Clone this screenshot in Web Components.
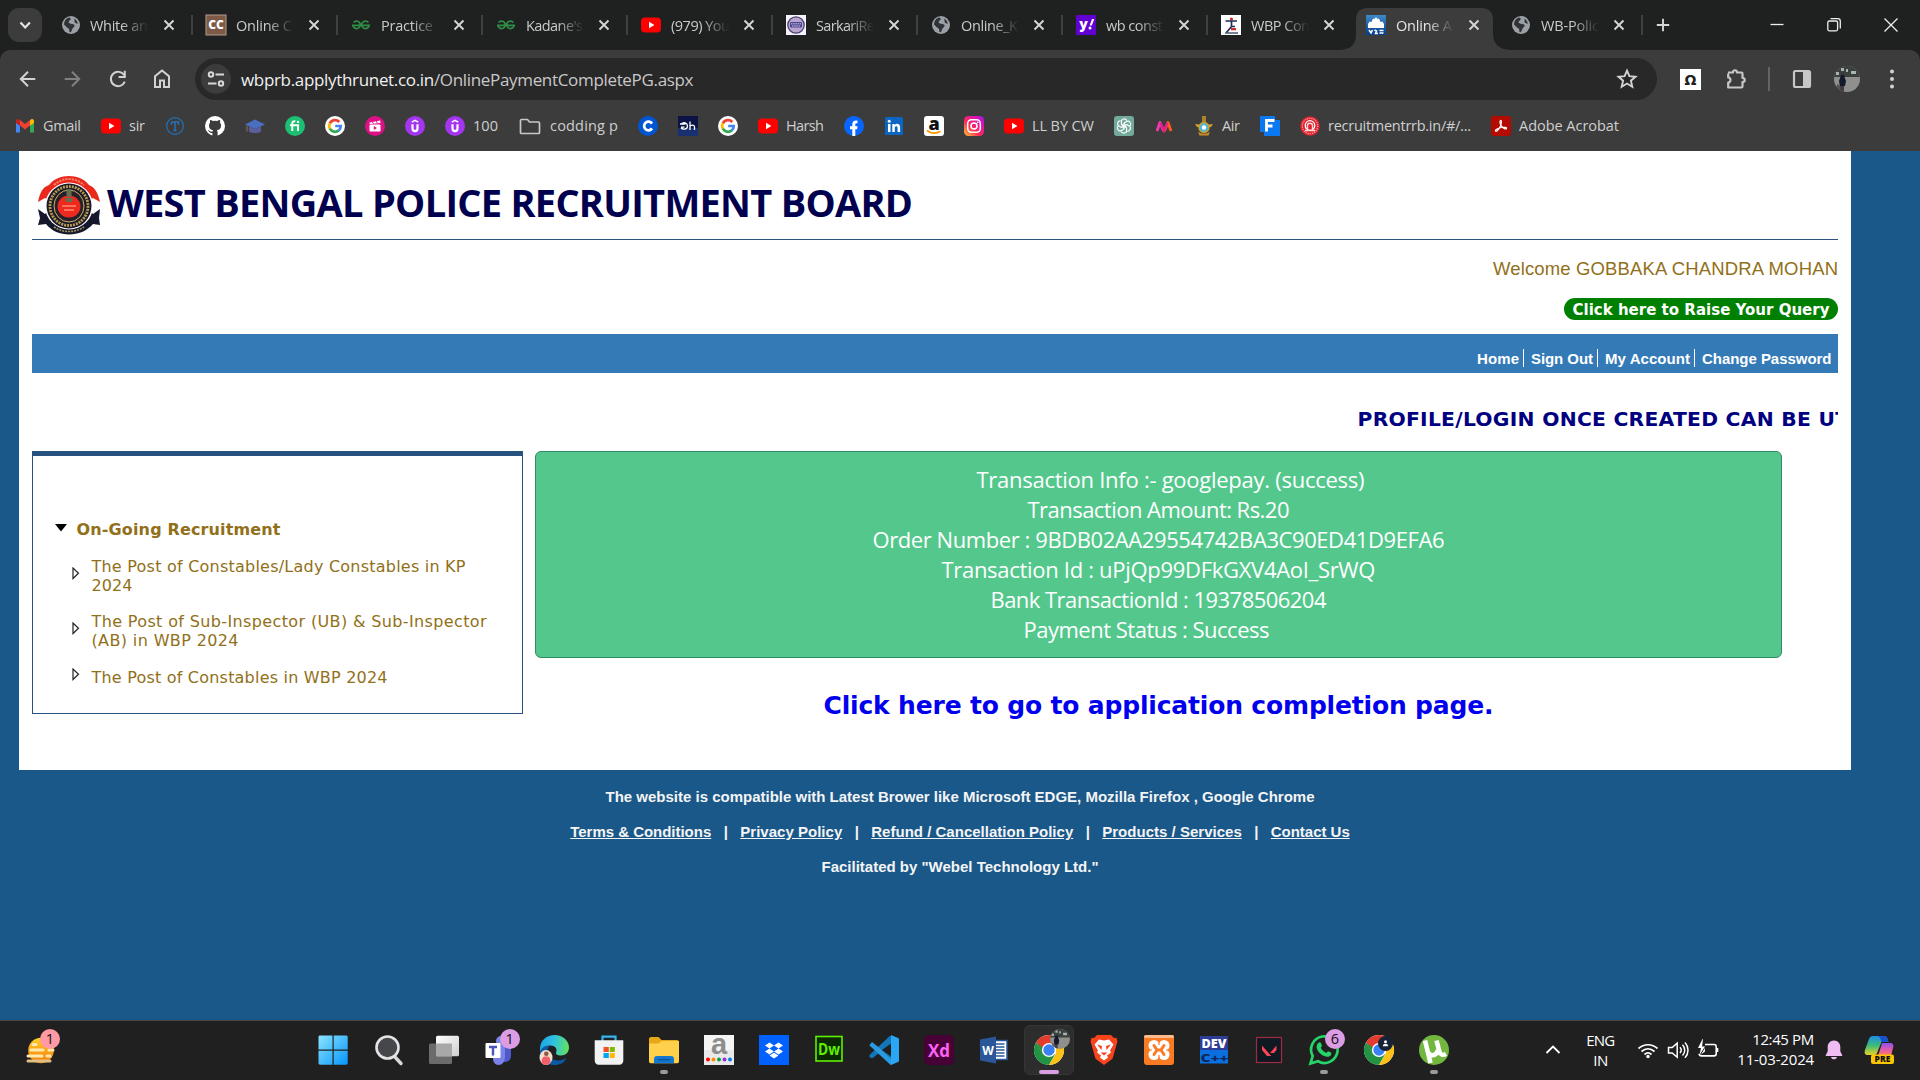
<!DOCTYPE html>
<html lang="en">
<head>
<meta charset="utf-8">
<title>West Bengal Police Recruitment Board</title>
<style>
html,body{margin:0;padding:0;width:1920px;height:1080px;overflow:hidden;background:#1a588a}
</style>
</head>
<body>
<desktop-screen></desktop-screen>
<script>
const UI = '"Open Sans","Noto Sans",sans-serif';
const ARIAL = '"Liberation Sans",Arial,sans-serif';
const VERDANA = '"DejaVu Sans",Verdana,sans-serif';

/* base class: renders css + html into an open shadow root */
class Base extends HTMLElement {
  connectedCallback() {
    if (this.shadowRoot) return;
    this.attachShadow({mode: 'open'}).innerHTML = `<style>*{box-sizing:border-box}${this.css()}</style>${this.html()}`;
  }
  css() { return ''; }
  html() { return '<slot></slot>'; }
}

/* text set to a fixed measure by tracking */
class FitText extends HTMLElement {
  connectedCallback() {
    if (!this.shadowRoot) this.attachShadow({mode: 'open'}).innerHTML =
      `<style>:host{display:block;white-space:pre;flex:none;width:${this.getAttribute('w')}px}span{display:inline-block}</style><span><slot></slot></span>`;
    FitText.all.add(this);
  }
  fit() {
    const s = this.shadowRoot.querySelector('span'), n = this.textContent.length;
    s.style.letterSpacing = '0px';
    const nat = s.getBoundingClientRect().width;
    s.style.letterSpacing = ((+this.getAttribute('w') - nat) / Math.max(1, n - 1)).toFixed(3) + 'px';
  }
}
FitText.all = new Set();
customElements.define('fit-text', FitText);

const YT = '<rect x="0" y="2.5" width="20" height="15" rx="4" fill="#f00"/><path d="M8 6.8v6.4l5.4-3.2z" fill="#fff"/>';
const GLOBE = '<circle cx="10" cy="10" r="9" fill="#9aa0a6"/><path d="M8 2.5c2 .6 2.2 1.8 1 2.7-1.8 1.2-1.8 2.2-.6 3 1.600 1 4 .2 5 1.800.6 1.300-.4 2-1.300 2.800-1.200 1.200-.9 3.200-2.600 4.400-1.400.3-1.300-1.200-1.200-2.200.1-1.500-1.200-1.800-2.300-2.600L3 9.500C3 6 5 3.300 8 2.500zM13 3.500c1.800.9 3.500 2.800 3.900 5.200-1.300-.1-2.900-.5-3.300-1.600-.4-1.100.6-1.700-.6-3.600z" fill="#303235"/>';
const G = '<circle cx="10" cy="10" r="10" fill="#fff"/><g fill="none" stroke-width="2.700"><path d="M14.300 6A5.800 5.800 0 0 0 4.900 7.300" stroke="#ea4335"/><path d="M4.900 7.200a5.800 5.800 0 0 0 0 5.600" stroke="#fbbc05"/><path d="M4.900 12.700a5.800 5.800 0 0 0 8.900 1.700" stroke="#34a853"/><path d="M10.200 10h5.500a5.600 5.600 0 0 1-2 4.500" stroke="#4285f4"/></g>';
const GFG = '<g fill="none" stroke="#2f8d46" stroke-width="1.700"><path d="M2.600 7.600A3.700 3.700 0 1 1 1.900 10.300M17.400 7.600A3.700 3.700 0 1 0 18.100 10.300M1 10.300H19"/></g>';
const UDEMY = '<circle cx="10" cy="10" r="10" fill="#a435f0"/><path d="M6.800 6.200 10 4.400l3.200 1.800" fill="none" stroke="#fff" stroke-width="1.500"/><path d="M7.500 8.200v4.400a2.500 2.500 0 0 0 5 0V8.200" fill="none" stroke="#fff" stroke-width="2.200"/>';
const CHROME = '<circle cx="15" cy="15" r="15" fill="#fff"/><path d="M15 15 2 7.500A15 15 0 0 1 28 7.500z" fill="#e33b2e"/><path d="M2 7.500A15 15 0 0 0 15 30l6.400-11.200L8.600 18.600z" fill="#229342"/><path d="M28 7.500A15 15 0 0 1 15 30l6.800-11.300L20.500 8z" fill="#fbc116"/><path d="M2 7.500 8.700 18.800 11 11zM28 7.500H14l7 3z" fill="#e33b2e"/><path d="M2 7.500 8.700 18.800l4.500-3z" fill="#229342"/><circle cx="15" cy="15" r="7.100" fill="#fff"/><circle cx="15" cy="15" r="5.700" fill="#3a82f2"/>';

const T = (x, y, s, f, w, t, fam = 'Open Sans', extra = '') =>
  `<text x="${x}" y="${y}" font-size="${s}" fill="${f}" font-weight="${w}" font-family="${fam},sans-serif" text-anchor="middle" ${extra}>${t}</text>`;

/* name: [width, height, svg content] */
const ICONS = {
  globe: [20, 20, GLOBE], yt: [20, 20, YT], g: [20, 20, G], gfg: [20, 20, GFG], udemy: [20, 20, UDEMY],
  cc: [20, 20, '<rect width="20" height="20" fill="#7d5a48" stroke="#b39a8b"/>' + T(10, 14.3, 12, '#fff', 800, 'CC')],
  sarkari: [20, 20, '<rect width="20" height="20" fill="#f4f2fa"/><circle cx="10" cy="10" r="8.200" fill="#b9a5cf" stroke="#4c4370" stroke-width="1.300"/><rect x="4" y="7" width="12" height="5.500" rx="1" fill="#4a4890"/><path d="M5 8.800h10M6 11h8" stroke="#d8cdea" stroke-width="1" stroke-dasharray="1.500 .7"/>'],
  yahoo: [20, 20, '<rect width="20" height="20" fill="#6001d2"/>' + T(7.500, 13.500, 14, '#fff', 800, 'y') + '<path d="M13.600 10.400 16 4h2.300l-2.500 6.400z" fill="#fff"/><circle cx="14" cy="13" r="1.500" fill="#fff"/>'],
  wbp: [20, 20, '<rect width="20" height="20" fill="#fff"/><circle cx="10.500" cy="4" r="1.600" fill="#d22"/><path d="M4.500 6H16M10.500 6v5.500L5.500 17.500M10.500 11.500h3.500" fill="none" stroke="#1d3150" stroke-width="1.700"/><path d="M10 13h5v2.300h-5z" fill="#d42b2b"/><path d="M4 18h13" stroke="#1d3150" stroke-width="1.200"/>'],
  wbprb: [20, 20, '<defs><linearGradient id="a" x2="0" y2="1"><stop stop-color="#3d8ac8"/><stop offset="1" stop-color="#063c8a"/></linearGradient></defs><rect width="20" height="20" fill="url(#a)"/><path d="M2 13V9l1.500-2.500 2 .5L7 3.500l1.500.5L10 2l1.500 2 1.500-.5L14.500 7l2-.5L18 9v4z" fill="#fff"/><path d="m3 15 2 3 1.500-3M8.500 15l2 1-1 2.500h2.500M13.500 15.500h4M13.500 18h4" fill="none" stroke="#fff" stroke-width="1.500"/>'],
  gmail: [20, 20, '<path d="M1 5v11.500h4V9.700z" fill="#4285f4"/><path d="M19 5v11.500h-4V9.700z" fill="#34a853"/><path d="M15 4.800v5L19 7V5c0-2-2-2.600-3.300-1.500z" fill="#fbbc04"/><path d="M1 5c0-2 2-2.600 3.300-1.500L5 4v5.800L1 7z" fill="#c5221f"/><path d="m5 4 5 4 5-4v5.600l-5 3.800-5-3.800z" fill="#ea4335"/>'],
  tc: [20, 20, '<circle cx="10" cy="10" r="8.300" fill="none" stroke="#2472b8" stroke-width="1.200"/><path d="M6.500 6h7v2.800M6.500 6v2.800M10 6v8.500M8.300 14.500h3.400" fill="none" stroke="#2472b8" stroke-width="1.500"/>'],
  github: [20, 20, '<circle cx="10" cy="10" r="10" fill="#fff"/><path d="M7.400 20v-3.100c-2.400.5-3.200-.6-3.700-1.800-.3-.6-.9-1-.9-1.200 1.500-.2 1.800 1.300 2.700 1.700.7.300 1.500.1 2 0 .1-.6.300-1 .7-1.300C5.600 14 4 12.600 4 9.500c0-1.100.4-2 1-2.700-.2-.8-.2-1.800.2-2.700 1 0 1.900.5 2.700 1a10 10 0 0 1 4.300 0c.8-.5 1.700-1 2.700-1 .4.900.4 1.900.2 2.700.6.700 1 1.600 1 2.700 0 3.100-1.700 4.500-4.300 4.800.5.500.8 1.100.8 2V20z" fill="#3c3c3c"/>'],
  cap: [20, 20, '<path d="m0 8.500 10-5 10 5-10 4.500z" fill="#4a6ec0"/><path d="M4 10.500v5c3 2 9 2 12 0v-5L10 13z" fill="#5a5f9c"/><path d="M2 9.500v6" stroke="#70605c" stroke-width="1.500"/>'],
  fi: [20, 20, '<circle cx="10" cy="10" r="10" fill="#1dbf73"/><path d="M7.300 15V7.300c0-1.600.9-2.200 3-2M5 9.300h9M13 9v6" fill="none" stroke="#fff" stroke-width="1.900"/><circle cx="13" cy="5.900" r="1.200" fill="#fff"/>'],
  clap: [20, 20, '<circle cx="10" cy="10" r="10" fill="#df0f88"/><rect x="4.500" y="8.500" width="11" height="7" rx="1" fill="#fff"/><path d="m4.500 6.600 10.600-2 .4 2.400-10.800 1z" fill="#fff"/><path d="m7 5.500 1.500 2M11 5l1.500 2" stroke="#df0f88" stroke-width="1"/><path d="M8.800 10v4l3.200-2z" fill="#df0f88"/>'],
  folder: [24, 20, '<path d="M3.500 3.500h6l2 2.500h9c.6 0 1 .4 1 1v9.500c0 .6-.4 1-1 1h-17c-.6 0-1-.4-1-1V4.500c0-.6.400-1 1-1z" fill="none" stroke="#c7c7c7" stroke-width="1.700"/>'],
  cblue: [20, 20, '<circle cx="10" cy="10" r="10" fill="#0056d2"/><path d="M14 12.400a4.300 4.300 0 1 1 0-4.800" fill="none" stroke="#fff" stroke-width="2.800"/>'],
  dh: [20, 20, '<rect width="20" height="20" fill="#0c1445"/><rect y="12" width="20" height="8" fill="#183070"/><path d="M2 8h5.500M3 11.200h3.500M3.500 8c2-2.500 6-1 6 2 0 3.500-4.500 4-6.500 1.800M12 5.500V14M12 10.500c1-2 4.500-2 4.500.5v3" fill="none" stroke="#fff" stroke-width="1.300"/>'],
  fb: [20, 20, '<circle cx="10" cy="10" r="10" fill="#0866ff"/><path d="M8.300 20v-6.700H6V10.300h2.300V8.600c0-3.200 1.600-4.300 5.200-3.900v2.600c-1.800-.1-2.200.2-2.200 1.500v1.500h2.300l-.5 3h-1.800V20z" fill="#fff"/>'],
  li: [20, 20, '<rect x="1" y="1" width="18" height="18" rx="1.500" fill="#0a66c2"/><path d="M4 8h2.500v8H4zM8.300 8h2.400v1.200c1.400-2.200 5.400-1.800 5.400 2V16h-2.500v-4.200c0-2.300-2.800-2-2.800 0V16H8.300z" fill="#fff"/><circle cx="5.200" cy="5.300" r="1.500" fill="#fff"/>'],
  amz: [20, 20, '<rect width="20" height="20" rx="3" fill="#fff"/>' + T(10, 13.600, 18, '#111', 800, 'a') + '<path d="M3 14.500c4 3.200 9.500 3.200 13.500.8" fill="none" stroke="#f90" stroke-width="1.800"/>'],
  insta: [20, 20, '<defs><linearGradient id="i" x1="0" y1="1" x2="1" y2="0"><stop stop-color="#ffc83a"/><stop offset=".4" stop-color="#ff2a55"/><stop offset=".75" stop-color="#dc12b5"/><stop offset="1" stop-color="#9c1be8"/></linearGradient></defs><rect width="20" height="20" rx="4.500" fill="url(#i)"/><rect x="3.700" y="3.700" width="12.600" height="12.600" rx="3.700" fill="none" stroke="#fff" stroke-width="1.500"/><circle cx="10" cy="10" r="3" fill="none" stroke="#fff" stroke-width="1.500"/><circle cx="13.700" cy="6.300" r=".9" fill="#fff"/>'],
  gpt: [20, 20, '<rect width="20" height="20" rx="3" fill="#74aa9c"/><g fill="none" stroke="#fff" stroke-width="1.100">' + [0,60,120,180,240,300].map(a => `<path transform="rotate(${a} 10 10)" d="M7.400 8.500V5.600c0-3 4.300-3.700 5.500-1M7.400 8.500l5 2.900"/>`).join('') + '</g>'],
  myntra: [20, 20, '<path d="M3 15 6 6.500 9.500 15" fill="none" stroke="#f13ab1" stroke-width="2.800" stroke-linejoin="round"/><path d="m10.500 15 3.500-8.500 3 8.500" fill="none" stroke="#fd5d1e" stroke-width="2.800" stroke-linejoin="round"/><path d="m6.500 7 3.500 8 3.500-8" fill="none" stroke="#e91e8c" stroke-width="2.300"/>'],
  air: [20, 20, '<path d="M1 8c3 0 5 1 9 1s6-1 9-1l-2 3-4 .5H7L3 11z" fill="#d1a32b"/><path d="M8 0h4v6H8z" fill="#a8842a"/><circle cx="10" cy="11.500" r="5" fill="#4fb5d8" stroke="#d1a32b" stroke-width="1.300"/><circle cx="10" cy="11.500" r="2.200" fill="#fff"/><path d="M4 15.500c3 3 9 3 12 0l-1.500 4h-9z" fill="#d08c28"/>'],
  f: [20, 20, '<path d="M0 0h15v4h5v16H4v-4H0z" fill="#0a78f0"/><path d="M6.500 15.500v-11h8M6.500 10h6" fill="none" stroke="#fff" stroke-width="2.800"/>'],
  rrb: [20, 20, '<circle cx="10" cy="10" r="9.800" fill="#e0202c"/><circle cx="10" cy="10" r="7.700" fill="none" stroke="#f6a0a4" stroke-width="1.300" stroke-dasharray="1.300 .9"/><circle cx="10" cy="9.500" r="4.800" fill="none" stroke="#fff" stroke-width="1.300"/><path d="M7.500 13V9.500c0-3 5-3 5 0V13M5 14.500h10" fill="none" stroke="#ffd9db" stroke-width="1.400"/>'],
  acro: [20, 20, '<rect width="20" height="20" rx="3" fill="#b30b00"/><path d="M9.400 4.500c1.500-.6 1.300 3.500-.6 6.800-1.400 2.600-3.400 4.600-4.300 3.700-.9-1 3-3 6.200-3.500 2.800-.4 5.200-.1 4.800 1-.5 1.300-3.500-.3-5-2.300-1.700-2.300-1.900-5.400-1.100-5.700z" fill="none" stroke="#fff" stroke-width="1.200"/>'],
  close: [14, 14, '<path d="m2.500 2.500 9 9M11.500 2.500l-9 9" stroke="#d6d6d6" stroke-width="1.900"/>'],
  plus: [14, 14, '<path d="M7 .8v12.400M.8 7h12.400" stroke="#d6d6d6" stroke-width="1.900"/>'],
  down: [34, 34, '<rect width="34" height="34" rx="11" fill="#3c3c3c"/><path d="m12.500 14.500 4.700 5 4.700-5" fill="none" stroke="#e4e4e4" stroke-width="2.200"/>'],
  min: [20, 20, '<path d="M3.500 9.500h13" stroke="#eee" stroke-width="1.300"/>'],
  max: [20, 20, '<rect x="3.800" y="6" width="9.800" height="9.800" rx="1.500" fill="none" stroke="#eee" stroke-width="1.300"/><path d="M6.500 3.700h7.300a2.500 2.500 0 0 1 2.500 2.500v7.300" fill="none" stroke="#eee" stroke-width="1.300"/>'],
  wclose: [20, 20, '<path d="m3.500 3.500 13 13M16.500 3.500l-13 13" stroke="#eee" stroke-width="1.300"/>'],
  back: [24, 24, '<path d="M19.300 12H5.500M12 4.800 4.800 12l7.200 7.200" fill="none" stroke="#d2d2d2" stroke-width="2"/>'],
  fwd: [24, 24, '<path d="M4.700 12h13.800M12 4.800l7.200 7.200-7.200 7.200" fill="none" stroke="#808080" stroke-width="2"/>'],
  reload: [24, 24, '<path d="M18.300 8.300a7.200 7.200 0 1 0 .5 6.400" fill="none" stroke="#d2d2d2" stroke-width="2"/><path d="M18.800 3.800v6.200h-6.200" fill="none" stroke="#d2d2d2" stroke-width="2"/>'],
  home: [24, 24, '<path d="M5 20V9.300L12 3.500l7 5.800V20h-5v-6.500h-4V20z" fill="none" stroke="#d2d2d2" stroke-width="2"/>'],
  tune: [30, 30, '<circle cx="15" cy="15" r="15" fill="#3c3c3c"/><g fill="none" stroke="#d8d8d8" stroke-width="2"><circle cx="10" cy="10.500" r="2.200"/><path d="M14.500 10.500H23M7 19.500h8.500"/><circle cx="20" cy="19.500" r="2.200"/></g>'],
  star: [24, 24, '<path d="m12 3.600 2.400 5.600 6.100.5-4.600 4 1.400 6-5.300-3.200-5.300 3.200 1.400-6-4.600-4 6.100-.5z" fill="none" stroke="#d2d2d2" stroke-width="1.900"/>'],
  omega: [21, 21, '<rect width="21" height="21" fill="#fff"/>' + T(10.500, 15.500, 14, '#222', 700, 'Ω', 'DejaVu Sans')],
  ext: [24, 24, '<path d="M4 5.500h5c-.3-3 4-3 4 0h4.500c.6 0 1 .4 1 1V11c3 0 3 4 0 4v4.500c0 .6-.4 1-1 1H4.200v-5c3 0 3-5 0-5v-4" fill="none" stroke="#c7c7c7" stroke-width="2.200" stroke-linejoin="round"/>'],
  panel: [24, 24, '<rect x="4" y="4" width="16" height="16" rx="1.500" fill="none" stroke="#c7c7c7" stroke-width="2.200"/><path d="M13 4h7v16h-7z" fill="#c7c7c7"/>'],
  avatar: [26, 26, '<defs><clipPath id="c"><circle cx="13" cy="13" r="13"/></clipPath></defs><g clip-path="url(#c)"><rect width="26" height="26" fill="#8f8f8d"/><rect width="26" height="11" fill="#3a403d"/><path d="M2 6h3v3H2zM7 2h3v3H7zM17 5h5v3h-5zM12 3h2v3h-2z" fill="#aab3b0"/><path d="M7 9c2-1.500 4 0 3.500 2l1.500 4-1 5-5 1-1-6z" fill="#151a2a"/><path d="M6 20h4v6H6z" fill="#463b41"/><path d="M3 18l3 2v5l-3-2z" fill="#57505a"/></g>'],
  dots: [24, 24, '<g fill="#d2d2d2"><circle cx="12" cy="4.500" r="2"/><circle cx="12" cy="12" r="2"/><circle cx="12" cy="19.500" r="2"/></g>'],
  /* taskbar */
  weather: [34, 34, '<defs><linearGradient id="w" x2="0" y2="1"><stop stop-color="#ffd02a"/><stop offset="1" stop-color="#f57a08"/></linearGradient></defs><circle cx="17" cy="17.500" r="12.800" fill="url(#w)"/><g stroke-width="3" stroke-linecap="round"><path d="M9 11.500h3M7 17h12M25 17h4M4 23h14M23 23h3" stroke="#ffe9b0"/><path d="M4 28h22" stroke="#e0bf85"/></g>'],
  win: [30, 30, '<defs><linearGradient id="b" x2="1" y2="1"><stop stop-color="#8be4ff"/><stop offset="1" stop-color="#0595f8"/></linearGradient></defs><g transform="translate(-.5 0)"><path d="M1.500.5H14v14H0V2C0 1.200.6.5 1.500.5zM15.200.5h12.500c.8 0 1.500.6 1.500 1.400v12.600h-14zM0 15.700h14v14H1.500c-.8 0-1.500-.6-1.500-1.400zM15.200 15.700h14v12.600c0 .8-.6 1.400-1.500 1.400H15.200z" fill="url(#b)"/></g>'],
  search: [30, 30, '<path d="m20.500 21.500 6.500 7" stroke="#d9d9dc" stroke-width="3.400" stroke-linecap="round"/><circle cx="13.500" cy="12.500" r="11" fill="#46474a" stroke="#e3e4e6" stroke-width="2.600"/>'],
  taskview: [32, 30, '<defs><linearGradient id="t" x2="1" y2="1"><stop stop-color="#fff"/><stop offset="1" stop-color="#cfcfcf"/></linearGradient></defs><rect x="1" y="8.500" width="23" height="20.500" rx="1.500" fill="#6b6b6b"/><rect x="8" y=".8" width="23" height="20.500" rx="1.500" fill="url(#t)"/><path d="M8 8.500h16v12.800H8z" fill="#a8a8a8"/>'],
  teams: [34, 34, '<circle cx="19" cy="8" r="5" fill="#7b83eb"/><path d="M17 10h12v13c0 3-2 6-6 6-5 0-7-3-7-6z" fill="#5059c9"/><path d="M11 10h12v13c0 6-3 9-6.500 9S11 29 11 25z" fill="#7b83eb"/><rect x="3.500" y="10" width="15" height="15" rx="1" fill="#fff"/><path d="M7 14h8M11 14v8.500" stroke="#4b53bc" stroke-width="2.400"/>'],
  edge: [30, 30, '<defs><linearGradient id="e" x1="0" y1=".3" x2="1" y2=".4"><stop stop-color="#1ba4e8"/><stop offset=".5" stop-color="#2fc3dc"/><stop offset="1" stop-color="#63e05e"/></linearGradient></defs><path d="M1 14C1 5 8 0 15.500 0 24 0 30 6 30 12.500c0 5-3.500 8-8 8-4 0-5.500-1.500-5-3 1.500-3 0-7-5.500-7C6 10.500 2 14 1 18z" fill="url(#e)"/><path d="M1 18c1-5 5-8 10-7.500-3 2.500-3 7 0 11s8 6 16.500 1.500C25 28 21 30 15.500 30 7 30 0 25 1 18z" fill="#0c59a4"/><ellipse cx="7" cy="22.500" rx="6.500" ry="7.500" fill="#f2ddcf"/><path d="M2.500 28c0-4 1-6 3-6.500h3.500c2 .5 2.500 3 2.500 6.500-3 2.500-6.500 2.500-9 0z" fill="#f0606a"/><circle cx="7.300" cy="18.800" r="2.300" fill="#8e5748"/>'],
  store: [30, 30, '<path d="M8.500 6V1.700h13V6" fill="none" stroke="#35b5f0" stroke-width="2.200"/><path d="M.7 5.300h28.600v20.500c0 2-1.600 4-4 4H4.700c-2.400 0-4-2-4-4z" fill="#f2f2f2"/><path d="M9.500 12h5.300v5H9.500z" fill="#f25022"/><path d="M15.800 12h5v5h-5z" fill="#7fba00"/><path d="M9.500 18h5.300v5H9.500z" fill="#00a4ef"/><path d="M15.800 18h5v5h-5z" fill="#ffb900"/>'],
  explorer: [30, 30, '<path d="M0 4c0-1 .8-2 2-2h7.500l3 3H28c1 0 2 1 2 2v8H0z" fill="#e6a817"/><path d="M0 8.500h9.500l3-2.500H30v20.500c0 1-.8 1.800-2 1.800H2c-1 0-2-.8-2-1.800z" fill="#ffd04c"/><path d="M5 28.300V24c0-1.700 1.200-3 3-3h14c1.800 0 3 1.300 3 3v4.300z" fill="#1177cf"/><path d="M9 24.700h12" stroke="#0a4f94" stroke-width="1.300"/>'],
  acolor: [30, 30, '<rect width="30" height="30" fill="#e9e9e9"/><rect width="30" height="15" fill="#f5f5f5"/>' + T(15, 19, 29, '#8d8d8d', 700, 'a', 'Liberation Sans') + '<circle cx="4" cy="24.500" r="2" fill="#f00"/><circle cx="9.500" cy="24.500" r="2" fill="#ff8a00"/><circle cx="15" cy="24.500" r="2" fill="#0a9d4a"/><circle cx="20.500" cy="24.500" r="2" fill="#8a35d6"/><circle cx="26" cy="24.500" r="2" fill="#0a78e8"/>'],
  dropbox: [30, 30, '<rect width="30" height="30" fill="#0061fe"/><g fill="#fff"><path d="m10.500 7.500 4.500 3-4.500 3-4.500-3zM19.500 7.500l4.500 3-4.500 3-4.500-3zM10.500 13.500l4.500 3-4.500 3-4.500-3zM19.500 13.500l4.500 3-4.500 3-4.500-3zM15 17.700l4.500 2.900-4.500 2.900-4.500-2.900z"/></g>'],
  dw: [30, 30, '<rect x="2" y="1.500" width="26" height="24.500" fill="#0b2a04" stroke="#5ff000" stroke-width="1.600"/>' + T(15, 19.500, 16.500, '#5ff000', 700, 'Dw', 'Open Sans', 'textLength="22" lengthAdjust="spacingAndGlyphs"')],
  vscode: [30, 30, '<path d="M21.500 0 29 3.500v23L21.500 30 9.500 18.500 3 23.500.5 22v-2L21.800 0z" fill="#1276b8"/><path d="M.5 10 3 7l7 5.500 12 11.500V30L.5 10.500z" fill="#2b9be0"/><path d="m22 0 8 3.500v23L22 30z" fill="#2aa6f2"/><path d="M22 8.500v13L13 15z" fill="#202020"/>'],
  xd: [30, 30, '<rect width="30" height="30" rx="5.500" fill="#470137"/>' + T(15, 21.500, 18, '#ff61f6', 700, 'Xd', 'Open Sans', 'textLength="22" lengthAdjust="spacingAndGlyphs"')],
  word: [30, 30, '<rect x="14" y="5.500" width="14" height="19" fill="#fff" stroke="#2b579a" stroke-width="1.500"/><path d="M17 9h8.500M17 12h8.500M17 15h8.500M17 18h8.500M17 21h8.500" stroke="#2b579a" stroke-width="1.300"/><path d="m1 4.500 16-3v27l-16-3z" fill="#2b579a"/>' + T(9, 19.500, 12, '#fff', 700, 'W')],
  chrome: [30, 30, CHROME],
  brave: [30, 30, '<path d="M8 0h14l3 3 2.500-.3 1 4-1 3-4 14L15 30 6.500 23.700l-4-14-1-3 1-4L5 3z" fill="#f8431c"/><path d="m15 5.500 5-1 4.500 5-3.500 6 1 2-4 3 1 2-4 3L11 22.500l1-2-4-3 1-2-3.500-6 4.500-5z" fill="#fff"/><path d="m8 9.500 5 1.500-.5 4zM22 9.500 17 11l.5 4zM11.500 17.500h7L15 20.500z" fill="#f8431c"/>'],
  xampp: [30, 30, '<rect width="30" height="30" rx="3" fill="#fb7a24"/><rect width="30" height="3" rx="1.500" fill="#fdbb90"/><g fill="#fff"><circle cx="10" cy="10.500" r="5.500"/><circle cx="20" cy="10.500" r="5.500"/><circle cx="10" cy="19.500" r="5.500"/><circle cx="20" cy="19.500" r="5.500"/><path d="M10 10h10v10H10z"/></g><g fill="none" stroke="#fb7a24" stroke-width="3" stroke-linecap="round"><path d="M10 10.500 13 15l-3 4.500M20 10.500 17 15l3 4.500M13 15h4"/></g><path d="M15 5v5M15 20v5M4 15h4M26 15h-4" stroke="#fb7a24" stroke-width="1.200"/>'],
  dev: [30, 30, '<rect x="1" y="1" width="28" height="14" fill="#2d3e96"/><rect x="1" y="15" width="28" height="13.500" fill="#0b6fe0"/>' + T(15, 12.700, 11.500, '#fff', 800, 'DEV', 'Open Sans', 'textLength="25" lengthAdjust="spacingAndGlyphs"') + T(15.500, 27.300, 11, '#0b2858', 800, 'C++', 'Open Sans', 'textLength="28" lengthAdjust="spacingAndGlyphs"')],
  val: [30, 30, '<rect x="2.500" y="2.500" width="25" height="25" fill="#101822" stroke="#9b2f3d" stroke-width="1.200"/><path d="M8 10.500v4.500l5 6h4.200zM22.500 10.500V15L20 18h-4z" fill="#fd4556"/>'],
  wa: [30, 30, '<path d="M1.500 28.500 3.700 21A13.300 13.300 0 1 1 9 26.300z" fill="none" stroke="#25d366" stroke-width="2.700"/><path d="M10 7.500c1-.5 1.700 0 2 .8l1 2.400c0 .8-1 1.400-1.200 2 1.200 2.400 3 4 5.500 5 .8 0 1.300-1.500 2-1.500l2.700 1.300c.5.400.4 2-.4 3-1.600 1.800-4.500 1.500-7 .3-3.300-1.500-6.700-5.200-7-8.600-.1-2 .9-4 2.400-4.700z" fill="#25d366"/>'],
  ut: [30, 30, '<circle cx="15" cy="15" r="15" fill="#72b840"/><path d="M6 5.500 11.500 28M8.500 16c1.500 6.500 9.500 5 10.500-1M17.500 5.500 20.500 17c.7 2.800 3.500 3.500 6.500 2" fill="none" stroke="#fff" stroke-width="4.600"/>'],
  chev: [20, 20, '<path d="m3.500 13 6.500-6.500L16.500 13" fill="none" stroke="#fff" stroke-width="1.800"/>'],
  wifi: [22, 22, '<g fill="none" stroke="#fff" stroke-width="1.700"><path d="M1.500 9.500c5.500-5 13.500-5 19 0M4.500 12.500c4-3.600 9-3.600 13 0M7.500 15.500c2.200-1.900 4.800-1.900 7 0"/></g><circle cx="11" cy="17.500" r="1.700" fill="#fff"/>'],
  vol: [22, 22, '<g fill="none" stroke="#fff" stroke-width="1.500"><path d="M1.500 8.500h3.700l5-4.300v14l-5-4.300H1.500zM13 8.300c1.500 1.700 1.500 4 0 5.700M15.500 5.800c3 3 3 7.700 0 10.700M18 3.500c4 4.500 4 10.800 0 15.300"/></g>'],
  bat: [22, 22, '<path d="M8 5.500h9c1.400 0 2.200.8 2.200 2.200v7c0 1.400-.8 2.200-2.200 2.200H4.500c-1.400 0-2.300-.8-2.300-2.200" fill="none" stroke="#fff" stroke-width="1.600"/><path d="M19.500 9h1.800v4h-1.800z" fill="#fff"/><path d="M5.500 0 1 9h3l-1.500 7L8 7.500H5L6 0z" fill="#fff"/><path d="M4 15.500 8 9v3.500z" fill="#fff"/>'],
  bell: [20, 22, '<path d="M10 1.500c4 0 6.300 3 6.300 6.500v4.500l1.900 3.500c.2.500 0 1-.5 1H2.300c-.5 0-.7-.5-.5-1l1.900-3.500V8c0-3.500 2.300-6.500 6.300-6.500zM7 18h6c-.4 1.700-1.500 2.300-3 2.300S7.400 19.700 7 18z" fill="#f0bdf2"/>'],
  copilot: [32, 30, '<defs><linearGradient id="p" x2="0" y2="1"><stop stop-color="#1c8fe8"/><stop offset=".5" stop-color="#3dbb78"/><stop offset="1" stop-color="#e8d22a"/></linearGradient><linearGradient id="q" x2="0" y2="1"><stop stop-color="#8b52f0"/><stop offset=".5" stop-color="#e85aa8"/><stop offset="1" stop-color="#ff8a4c"/></linearGradient></defs><path d="M9 1h11c2 0 3 1 3.500 3l1 3h-7L13 18c-.5 1-1.500 2-3 2H4c-3 0-4-2-3-5L5 4c.7-2 2-3 4-3z" fill="url(#p)"/><path d="M14 1h6c2 0 3 1 3.500 3l1 3h-7c-1-3-1.500-5-3.500-6z" fill="#1a4fcf"/><path d="M18 8h8c3 0 4 2 3 5l-2 8-14 1 2-4z" fill="url(#q)"/><rect x="7" y="19.500" width="23" height="9.500" rx="2" fill="#fdc500"/>' + T(18.500, 27.300, 8.500, '#111', 800, 'PRE', 'Open Sans', 'textLength="16"')],
  emblem: [64, 60, '<path d="M1 27C3 17 6 12 12 10 21-2 43-2 52 10c5 2 9 7 11 17l-7-4-5 3H13l-5-3z" fill="#e8291c"/><path d="M1 34l7 5 4-4h40l4 4 7-5-1 9 1 7-7-1C44 63 20 63 9 49l-8 1 2-7z" fill="#15182c"/><ellipse cx="32" cy="31" rx="24" ry="23.500" fill="#fff"/><ellipse cx="32" cy="31" rx="22.500" ry="22.500" fill="#1d1a28"/><ellipse cx="32" cy="31" rx="19" ry="19.500" fill="none" stroke="#b49a53" stroke-width="2.800" stroke-dasharray="2 1"/><ellipse cx="32" cy="31" rx="15" ry="16" fill="#27202a" stroke="#d0b566"/><ellipse cx="32" cy="31.500" rx="11.500" ry="11" fill="#ee2a20"/><path d="M28 23h8l-1 4h-6zM29.500 14h5v8h-5z" fill="#64704e"/><path d="M25 31h14M27 35h10" stroke="#ff8a6b" stroke-width="1.300"/><path d="M17 52c9 6 21 6 30 0" fill="none" stroke="#a9955d" stroke-width="1.600" stroke-dasharray="2 1"/><path d="M17 10c9-8 21-8 30 0" fill="none" stroke="#f6806a" stroke-width="2" stroke-dasharray="2.200 1"/>'],
};

class AppIcon extends Base {
  css() {
    const [w, h] = ICONS[this.getAttribute('name')], s = +(this.getAttribute('size') || w);
    return `:host{display:block;flex:none;width:${s}px;height:${s * h / w}px}svg{display:block;width:100%;height:100%;overflow:visible}`;
  }
  html() {
    const [w, h, c] = ICONS[this.getAttribute('name')];
    return `<svg viewBox="0 0 ${w} ${h}">${c}</svg>`;
  }
}
customElements.define('app-icon', AppIcon);

class BrowserTab extends Base {
  css() {
    return `:host{display:flex;align-items:center;position:relative;flex:none;width:145px;height:50px;padding-left:14px;box-sizing:border-box;font:14.5px/51px ${UI};color:#c9cbca}
    :host([active]){color:#e4e4e4}
    .bg{position:absolute;left:-12px;top:8px;width:170px;height:42px}
    app-icon{position:relative}
    .t{position:relative;margin-left:10px;width:60px;height:50px;overflow:hidden;-webkit-mask-image:linear-gradient(90deg,#000 52%,transparent 97%);mask-image:linear-gradient(90deg,#000 52%,transparent 97%)}
    .t.first{margin-left:9px;margin-right:1px}
    .x{margin-left:10.500px}
    i{position:absolute;right:-1px;top:15px;width:2px;height:20px;background:#3f4140}`;
  }
  html() {
    const a = this.hasAttribute('active');
    return `${a ? '<svg class="bg" viewBox="0 0 170 42"><path d="M0 42Q16 41 16 27V12Q16 0 28 0H141Q153 0 153 12V27Q154 41 170 42Z" fill="#3c3c3c"/></svg>' : ''}
    <app-icon name="${this.getAttribute('icon')}"></app-icon><div class="t ${this.hasAttribute('first') ? 'first' : ''}"><fit-text w="${this.getAttribute('w')}">${this.getAttribute('label')}</fit-text></div>
    <app-icon class="x" name="close"></app-icon>${this.hasAttribute('sep') ? '<i></i>' : ''}`;
  }
}
customElements.define('browser-tab', BrowserTab);

class TabStrip extends Base {
  css() {
    return `:host{display:flex;align-items:center;height:50px;background:#1f2121;padding-left:8px}
    .tabs{display:flex;margin-left:5px}.plus{margin-left:14px}.win{display:flex;gap:37px;margin-left:97px}`;
  }
  html() {
    const tabs = [['globe','White an',58],['cc','Online C',56],['gfg','Practice',52],['gfg','Kadane\'s',57],['yt','(979) You',59],['sarkari','SarkariRe',59],['globe','Online_K',57],['yahoo','wb const',57],['wbp','WBP Con',59],['wbprb','Online A',56],['globe','WB-Polic',58]];
    return `<app-icon name="down"></app-icon><div class="tabs">${tabs.map(([i, t, w], n) =>
      `<browser-tab icon="${i}" label="${t}" w="${w}" ${n === 0 ? 'first' : ''} ${n === 9 ? 'active' : ''} ${n < 8 || n === 10 ? 'sep' : ''}></browser-tab>`).join('')}</div>
    <app-icon class="plus" name="plus"></app-icon><div class="win"><app-icon name="min"></app-icon><app-icon name="max"></app-icon><app-icon name="wclose"></app-icon></div>`;
  }
}
customElements.define('tab-strip', TabStrip);

class AddressBar extends Base {
  css() {
    return `:host{display:flex;align-items:center;height:58px;background:#3c3c3c;border-radius:10px 10px 0 0;padding-left:16px}
    .omni{display:flex;align-items:center;width:1462px;height:42px;border-radius:21px;background:#282828;padding:0 18px 0 6px;font:17px/43px ${UI};color:#c8c8c8}
    fit-text{margin-left:10px}b{font-weight:400;color:#f0f0f0}.star{margin-left:auto}
    i{width:1.500px;height:24px;background:#646464;margin-left:20px}`;
  }
  html() {
    const ic = (n, m) => `<app-icon name="${n}" style="margin-left:${m}px"></app-icon>`;
    return `${ic('back', 0)}${ic('fwd', 20)}${ic('reload', 21.5)}${ic('home', 20.5)}
    <div class="omni" style="margin-left:21px"><app-icon name="tune"></app-icon><fit-text w="452.5"><b>wbprb.applythrunet.co.in</b>/OnlinePaymentCompletePG.aspx</fit-text><app-icon class="star" name="star"></app-icon></div>
    ${ic('omega', 23)}${ic('ext', 23)}<i></i>${ic('panel', 20)}${ic('avatar', 20)}${ic('dots', 20)}`;
  }
}
customElements.define('address-bar', AddressBar);

class BookmarkBar extends Base {
  css() {
    return `:host{display:flex;align-items:center;gap:20px;height:43px;background:#3c3c3c;padding:0 0 8px 15px;box-sizing:border-box;font:14.5px/34px ${UI};color:#cfcfcf}
    div{display:flex;align-items:center;gap:8px;flex:none;height:35px}fit-text{padding-top:1px}`;
  }
  html() {
    return [['gmail','Gmail',38],['yt','sir',16],['tc'],['github'],['cap'],['fi'],['g'],['clap'],['udemy'],['udemy','100',25],['folder','codding p',68],['cblue'],['dh'],['g'],['yt','Harsh',38],['fb'],['li'],['amz'],['insta'],['yt','LL BY CW',62],['gpt'],['myntra'],['air','Air',18],['f'],['rrb','recruitmentrrb.in/#/...',143],['acro','Adobe Acrobat',100]]
      .map(([i, t, w]) => `<div><app-icon name="${i}"></app-icon>${t ? `<fit-text w="${w}">${t}</fit-text>` : ''}</div>`).join('');
  }
}
customElements.define('bookmark-bar', BookmarkBar);

class SiteHeader extends Base {
  css() {
    return `:host{display:flex;flex-direction:column}
    .brand{display:flex;height:89px;border-bottom:1px solid #2b5480;padding-left:5px}
    .brand app-icon{margin:24px 6px 0 0}
    .brand fit-text{font:700 38px/50px ${UI};color:#00004f;margin-top:26px}
    .welcome{align-self:flex-end;margin-top:17px;font:18.500px/24px ${ARIAL};color:#917019}
    .pill{align-self:flex-end;margin-top:17px;width:274px;height:22px;border-radius:11px;background:#008000;padding-left:8.500px;font:700 15px/24px ${VERDANA};color:#fff}
    nav{display:flex;justify-content:flex-end;margin-top:14px;height:39px;padding:15px 6.500px 0 0;background:#337ab7;font:700 15px/20px ${ARIAL};color:#fff}
    nav i{width:1px;height:18px;background:#fff;margin:0 7px 0 4px}
    .marquee{display:flex;margin-top:31px;height:30px;padding-left:1325.500px;overflow:hidden;font:700 20.300px/30px ${VERDANA};color:#000080}`;
  }
  html() {
    return `<div class="brand"><app-icon name="emblem"></app-icon><fit-text w="806">WEST BENGAL POLICE RECRUITMENT BOARD</fit-text></div>
    <fit-text class="welcome" w="345">Welcome GOBBAKA CHANDRA MOHAN</fit-text>
    <div class="pill"><fit-text w="257">Click here to Raise Your Query</fit-text></div>
    <nav><fit-text w="42">Home</fit-text><i></i><fit-text w="62">Sign Out</fit-text><i></i><fit-text w="85">My Account</fit-text><i></i><fit-text w="129.5">Change Password</fit-text></nav>
    <div class="marquee"><fit-text w="491.5">PROFILE/LOGIN ONCE CREATED CAN BE UT</fit-text></div>`;
  }
}
customElements.define('site-header', SiteHeader);

class RecruitmentMenu extends Base {
  css() {
    return `:host{display:flex;flex-direction:column;box-sizing:border-box;flex:none;width:491px;height:263px;border:1px solid #27527f;border-top-width:5px;padding:63px 0 0 21.500px;font:16px/19px ${VERDANA};color:#917019}
    .head{display:flex;font-weight:700;line-height:22px;height:20px}
    .head svg{margin:5px 10px 0 0}
    .item{display:flex;margin:18px 0 0 17px}.item svg{flex:none;margin-right:12px}`;
  }
  html() {
    const items = [[10, ['The Post of Constables/Lady Constables in KP', 374], ['2024', 41]], [10, ['The Post of Sub-Inspector (UB) &amp; Sub-Inspector', 395], ['(AB) in WBP 2024', 147]], [-0.5, ['The Post of Constables in WBP 2024', 296]]];
    return `<div class="head"><svg width="12" height="8"><path d="M0 0h12L6 7.500z" fill="#000"/></svg><fit-text w="204">On-Going Recruitment</fit-text></div>` +
      items.map(([m, ...l], n) => `<div class="item" style="${n === 1 ? 'margin-top:17px' : ''}"><svg width="8" height="13" style="margin-top:${m}px"><path d="M1 1v10.500l5.500-5.200z" fill="none" stroke="#222" stroke-width="1.200"/></svg><div>${l.map(([t, w]) => `<fit-text w="${w}">${t}</fit-text>`).join('')}</div></div>`).join('');
  }
}
customElements.define('recruitment-menu', RecruitmentMenu);

class PaymentResult extends Base {
  css() {
    return `:host{display:flex;flex-direction:column;flex:none;width:1247px}
    .alert{display:flex;flex-direction:column;align-items:center;height:207px;border:1px solid #2e8b63;border-radius:6px;background:#54c88c;padding-top:12px;font:22px/30px ${UI};color:#fff}
    .first{margin-left:24px}.last{margin-right:24px}
    .go{align-self:center;margin-top:33px;font:700 25px/30px ${VERDANA};color:#00e;}`;
  }
  html() {
    return `<div class="alert"><fit-text class="first" w="388">Transaction Info :- googlepay. (success)</fit-text><fit-text w="262">Transaction Amount: Rs.20</fit-text><fit-text w="572">Order Number : 9BDB02AA29554742BA3C90ED41D9EFA6</fit-text><fit-text w="434">Transaction Id : uPjQp99DFkGXV4AoI_SrWQ</fit-text><fit-text w="336">Bank TransactionId : 19378506204</fit-text><fit-text class="last" w="246">Payment Status : Success</fit-text></div>
    <fit-text class="go" w="670">Click here to go to application completion page.</fit-text>`;
  }
}
customElements.define('payment-result', PaymentResult);

class SiteFooter extends Base {
  css() {
    return `:host{display:flex;flex-direction:column;align-items:center;padding-top:9px;font:700 15px/35px ${ARIAL};color:#f4f4f4}
    .links{display:flex}.links span{width:29px;text-align:center}
    u{text-decoration:underline}`;
  }
  html() {
    const links = [['Terms &amp; Conditions', 141], ['Privacy Policy', 102], ['Refund / Cancellation Policy', 202], ['Products / Services', 139.5], ['Contact Us', 79]];
    return `<fit-text w="709">The website is compatible with Latest Brower like Microsoft EDGE, Mozilla Firefox , Google Chrome</fit-text>
    <div class="links">${links.map(([t, w]) => `<fit-text w="${w}"><u>${t}</u></fit-text>`).join('<span>|</span>')}</div>
    <fit-text w="277">Facilitated by "Webel Technology Ltd."</fit-text>`;
  }
}
customElements.define('site-footer', SiteFooter);

class SitePage extends Base {
  css() {
    return `:host{display:flex;flex-direction:column;height:869px;background:#1a588a}
    .card{width:1832px;height:619px;margin-left:19px;padding:0 13px;background:#fff}
    .cols{display:flex;gap:12px;margin-top:17px}`;
  }
  html() {
    return `<div class="card"><site-header></site-header><div class="cols"><recruitment-menu></recruitment-menu><payment-result></payment-result></div></div><site-footer></site-footer>`;
  }
}
customElements.define('site-page', SitePage);

class TaskButton extends Base {
  css() {
    return `:host{display:flex;align-items:center;justify-content:center;position:relative;flex:none;width:55px;height:58px}
    .tile{position:absolute;left:2.500px;top:4px;width:50px;height:50px;border-radius:6px;background:#2d2d2d;border:1px solid #363636}
    .bar{position:absolute;left:23.500px;top:49px;width:8px;height:4px;border-radius:2px;background:#9a9a9a}
    :host([active]) .bar{left:17.500px;width:20px;background:#d8a0e0}
    app-icon{position:relative}
    .badge,.face{position:absolute;left:28.500px;top:8px;width:20px;height:20px;border-radius:50%;text-align:center;font:14.5px/20px ${UI};color:#111;background:var(--badge,#dc9de4)}
    .badge.at-left{left:27px}
    .face{background:none}
    .user{position:absolute;left:27px;top:15px;width:15px;height:15px}`;
  }
  html() {
    const a = n => this.getAttribute(n);
    return `${this.hasAttribute('active') ? '<div class="tile"></div>' : ''}<app-icon name="${a('icon')}"></app-icon>
    ${a('badge') ? `<div class="badge ${a('icon') === 'weather' ? 'at-left' : ''}">${a('badge')}</div>` : ''}${this.hasAttribute('face') ? '<app-icon class="face" name="avatar" size="20" style="position:absolute"></app-icon>' : ''}
    ${this.hasAttribute('user') ? '<svg class="user" viewBox="0 0 15 15"><circle cx="7.500" cy="7.500" r="7.500" fill="#152238"/><circle cx="7.500" cy="5.800" r="1.500" fill="#fff"/><path d="M4.800 10.300c0-3.300 5.400-3.300 5.400 0z" fill="#fff"/></svg>' : ''}
    ${this.hasAttribute('running') ? '<div class="bar"></div>' : ''}`;
  }
}
customElements.define('task-button', TaskButton);

class TaskBar extends Base {
  css() {
    return `:host{display:flex;height:60px;box-sizing:border-box;border-top:1px solid #484848;background:#202020;font:15px/20px ${UI};color:#fff}
    .weather{margin-left:13px;--badge:#ff99a4}
    .apps{display:flex;margin-left:238px;gap:.030px}
    .tray{display:flex;align-items:center;height:58px;margin-left:81.400px}
    .col{display:flex;flex-direction:column;margin-top:-1px}`;
  }
  html() {
    const apps = ['icon="win"','icon="search"','icon="taskview"','icon="teams" badge="1"','icon="edge"','icon="store"','icon="explorer" running','icon="acolor"','icon="dropbox"','icon="dw"','icon="vscode"','icon="xd"','icon="word"','icon="chrome" active running face','icon="brave"','icon="xampp"','icon="dev"','icon="val"','icon="wa" badge="6" running','icon="chrome" user','icon="ut" running'];
    return `<task-button class="weather" icon="weather" badge="1"></task-button><div class="apps">${apps.map(a => `<task-button ${a}></task-button>`).join('')}</div>
    <div class="tray"><app-icon name="chev"></app-icon>
    <div class="col" style="align-items:center;margin-left:23.5px"><fit-text w="29">ENG</fit-text><fit-text w="15">IN</fit-text></div>
    <app-icon name="wifi" style="margin-left:21.5px"></app-icon><app-icon name="vol" style="margin-left:8px"></app-icon><app-icon name="bat" style="margin-left:8px"></app-icon>
    <div class="col" style="align-items:flex-end;margin-left:18.5px;margin-top:-2px"><fit-text w="62">12:45 PM</fit-text><fit-text w="77">11-03-2024</fit-text></div>
    <app-icon name="bell" style="margin-left:9.5px"></app-icon><app-icon name="copilot" style="margin-left:20px"></app-icon></div>`;
  }
}
customElements.define('task-bar', TaskBar);

class DesktopScreen extends Base {
  css() { return `:host{display:flex;flex-direction:column;width:1920px;height:1080px;overflow:hidden;background:#1f2121}`; }
  html() { return '<tab-strip></tab-strip><address-bar></address-bar><bookmark-bar></bookmark-bar><site-page></site-page><task-bar></task-bar>'; }
}
customElements.define('desktop-screen', DesktopScreen);

FitText.all.forEach(t => t.fit());
</script>
</body>
</html>
